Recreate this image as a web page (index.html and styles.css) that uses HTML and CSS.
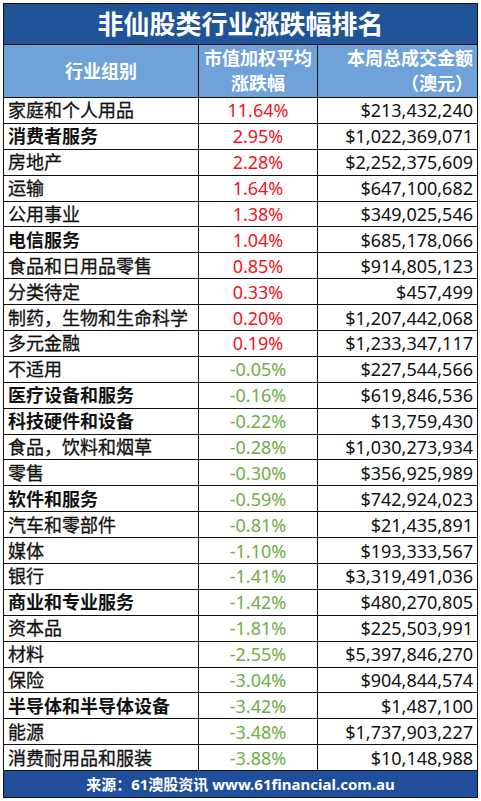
FILE: index.html
```html
<!DOCTYPE html>
<html lang="zh-CN">

<head>
    <meta charset="UTF-8" />
    <meta name="viewport" content="width=device-width, initial-scale=1.0" />
    <title>非仙股类行业涨跌幅排名</title>
    <link rel="stylesheet" href="styles.css">
</head>

<body>

    <table class="rank-table">
        <colgroup>
            <col class="col-name">
            <col class="col-pct">
            <col class="col-vol">
        </colgroup>
        <thead>
            <tr class="title-row">
                <th colspan="3">非仙股类行业涨跌幅排名</th>
            </tr>
            <tr class="head-row">
                <th class="c">行业组别</th>
                <th class="c">市值加权平均<br>涨跌幅</th>
                <th class="r">本周总成交金额<br>（澳元）</th>
            </tr>
        </thead>
        <tbody>
            <tr><td>家庭和个人用品</td><td class="up">11.64%</td><td class="num">$213,432,240</td></tr>
            <tr><td class="b">消费者服务</td><td class="up">2.95%</td><td class="num">$1,022,369,071</td></tr>
            <tr><td>房地产</td><td class="up">2.28%</td><td class="num">$2,252,375,609</td></tr>
            <tr><td>运输</td><td class="up">1.64%</td><td class="num">$647,100,682</td></tr>
            <tr><td>公用事业</td><td class="up">1.38%</td><td class="num">$349,025,546</td></tr>
            <tr><td class="b">电信服务</td><td class="up">1.04%</td><td class="num">$685,178,066</td></tr>
            <tr><td>食品和日用品零售</td><td class="up">0.85%</td><td class="num">$914,805,123</td></tr>
            <tr><td>分类待定</td><td class="up">0.33%</td><td class="num">$457,499</td></tr>
            <tr><td>制药，生物和生命科学</td><td class="up">0.20%</td><td class="num">$1,207,442,068</td></tr>
            <tr><td>多元金融</td><td class="up">0.19%</td><td class="num">$1,233,347,117</td></tr>
            <tr><td>不适用</td><td class="down">-0.05%</td><td class="num">$227,544,566</td></tr>
            <tr><td class="b">医疗设备和服务</td><td class="down">-0.16%</td><td class="num">$619,846,536</td></tr>
            <tr><td class="b">科技硬件和设备</td><td class="down">-0.22%</td><td class="num">$13,759,430</td></tr>
            <tr><td>食品，饮料和烟草</td><td class="down">-0.28%</td><td class="num">$1,030,273,934</td></tr>
            <tr><td>零售</td><td class="down">-0.30%</td><td class="num">$356,925,989</td></tr>
            <tr><td class="b">软件和服务</td><td class="down">-0.59%</td><td class="num">$742,924,023</td></tr>
            <tr><td>汽车和零部件</td><td class="down">-0.81%</td><td class="num">$21,435,891</td></tr>
            <tr><td>媒体</td><td class="down">-1.10%</td><td class="num">$193,333,567</td></tr>
            <tr><td>银行</td><td class="down">-1.41%</td><td class="num">$3,319,491,036</td></tr>
            <tr><td class="b">商业和专业服务</td><td class="down">-1.42%</td><td class="num">$480,270,805</td></tr>
            <tr><td>资本品</td><td class="down">-1.81%</td><td class="num">$225,503,991</td></tr>
            <tr><td>材料</td><td class="down">-2.55%</td><td class="num">$5,397,846,270</td></tr>
            <tr><td>保险</td><td class="down">-3.04%</td><td class="num">$904,844,574</td></tr>
            <tr><td class="b">半导体和半导体设备</td><td class="down">-3.42%</td><td class="num">$1,487,100</td></tr>
            <tr><td>能源</td><td class="down">-3.48%</td><td class="num">$1,737,903,227</td></tr>
            <tr><td>消费耐用品和服装</td><td class="down">-3.88%</td><td class="num">$10,148,988</td></tr>
        </tbody>
        <tfoot>
            <tr class="foot-row">
                <td colspan="3">来源：61澳股资讯 www.61financial.com.au</td>
            </tr>
        </tfoot>
    </table>

</body>

</html>
```

FILE: styles.css
```css
body {
    margin: 0;
    padding: 3px 4px 0 3px;
    background: #fff;
    font-family: "Noto Sans", "Noto Sans CJK SC", sans-serif;
    color: #111;
}

.rank-table {
    width: 474px;
    border-collapse: collapse;
    table-layout: fixed;
}

.col-name {
    width: 195px;
}

.col-pct {
    width: 119px;
}

.col-vol {
    width: 160px;
}

.rank-table th,
.rank-table td {
    border: 1px solid #111;
    padding: 0 4px;
    white-space: nowrap;
}

/* --- header --- */
.title-row th {
    height: 40px;
    padding: 0;
    background: #1f5597;
    color: #fff;
    font-size: 26px;
    font-weight: 700;
    text-align: center;
    line-height: 40px;
}

.head-row th {
    height: 52px;
    background: #6fa2d8;
    color: #fff;
    font-size: 18px;
    font-weight: 700;
    line-height: 25px;
}

.head-row .c {
    text-align: center;
}

.head-row .r {
    text-align: right;
}

/* --- body rows --- */
.rank-table tbody td {
    height: 24.9px;
    font-size: 18px;
    font-weight: 400;
    line-height: 24px;
}

/* 行业名称略加粗，贴近原图 */
.rank-table tbody td:first-child {
    -webkit-text-stroke: 0.3px currentColor;
}

.rank-table tbody td.b {
    font-weight: 700;
    -webkit-text-stroke: 0;
}

.up,
.down {
    text-align: center;
}

.up {
    color: #f0141c;
}

.down {
    color: #6fae45;
}

.num {
    text-align: right;
}

/* --- footer --- */
.foot-row td {
    height: 26px;
    padding: 0;
    background: #1f4f9c;
    color: #fff;
    font-size: 15px;
    font-weight: 700;
    text-align: center;
    line-height: 26px;
}
```
